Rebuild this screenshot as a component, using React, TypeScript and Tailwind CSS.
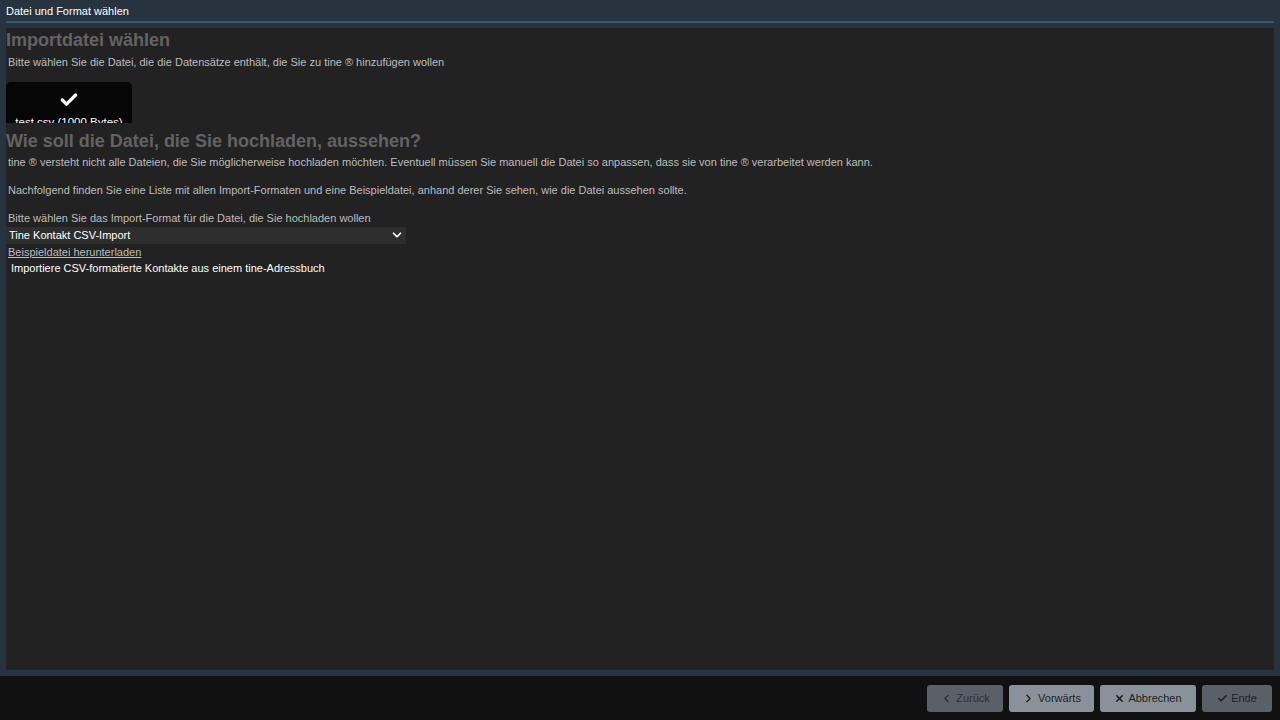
import React, { useState } from 'react';
import { Check, ChevronDown, ChevronLeft, ChevronRight, X } from 'lucide-react';

const formats = [
  { id: 'tine-csv', label: 'Tine Kontakt CSV-Import', description: 'Importiere CSV-formatierte Kontakte aus einem tine-Adressbuch' },
  { id: 'vcard', label: 'vCard Import', description: 'Importiere Kontakte aus einer vCard-Datei' },
];

const App: React.FC = () => {
  const [format, setFormat] = useState(formats[0].id);
  const current = formats.find((f) => f.id === format) ?? formats[0];

  return (
    <div className="flex flex-col h-[720px] w-full bg-[#27343f] text-[11px] font-['Liberation_Sans',Arial,sans-serif] overflow-hidden">
      {/* Window title */}
      <div className="px-[6px] pt-[4px] h-[21px] text-white leading-[14px]">Datei und Format wählen</div>
      <div className="mx-[6px] h-[2px] bg-[#35557a]" />

      {/* Wizard step */}
      <div className="flex-1 mx-[6px] mt-[5px] mb-[6px] bg-[#222222] overflow-hidden">
        <h2 className="text-[18px] font-bold text-[#626262] leading-[22px] mt-[1px]">Importdatei wählen</h2>
        <p className="text-[#bdbdbd] px-[2px] mt-[5px] leading-[13px]">
          Bitte wählen Sie die Datei, die die Datensätze enthält, die Sie zu tine ® hinzufügen wollen
        </p>

        {/* uploaded file tile, clipped like in the uploader */}
        <div className="mt-[13px] w-[126px] h-[41px] bg-[#060606] rounded-t-[5px] flex flex-col items-center overflow-hidden">
          <Check className="w-[20px] h-[20px] mt-[8px] text-white shrink-0" strokeWidth={4} />
          <span className="text-white text-[11.5px] mt-[6px] leading-[13px] whitespace-nowrap shrink-0">test.csv (1000 Bytes)</span>
        </div>

        <h2 className="text-[18px] font-bold text-[#626262] leading-[22px] mt-[7px]">
          Wie soll die Datei, die Sie hochladen, aussehen?
        </h2>
        <div className="px-[2px] text-[#bdbdbd] leading-[13px]">
          <p className="mt-[4px]">
            tine ® versteht nicht alle Dateien, die Sie möglicherweise hochladen möchten. Eventuell müssen Sie manuell die Datei so anpassen, dass sie von tine ® verarbeitet werden kann.
          </p>
          <p className="mt-[15px]">
            Nachfolgend finden Sie eine Liste mit allen Import-Formaten und eine Beispieldatei, anhand derer Sie sehen, wie die Datei aussehen sollte.
          </p>
          <p className="mt-[15px]">Bitte wählen Sie das Import-Format für die Datei, die Sie hochladen wollen</p>
        </div>

        <div className="relative mt-[2px] w-[400px] h-[17px] bg-[#2e2e2e]">
          <select
            value={format}
            onChange={(e) => setFormat(e.target.value)}
            className="appearance-none w-full h-full bg-transparent text-white pl-[3px] leading-[17px] outline-none"
          >
            {formats.map((f) => (
              <option key={f.id} value={f.id} className="bg-[#2e2e2e]">
                {f.label}
              </option>
            ))}
          </select>
          <ChevronDown className="absolute right-[2px] top-[1px] w-[14px] h-[14px] text-white pointer-events-none" strokeWidth={3} />
        </div>
        <a className="block px-[2px] mt-[2px] text-[#bdbdbd] underline leading-[13px] w-max cursor-pointer">
          Beispieldatei herunterladen
        </a>
        <p className="px-[5px] mt-[3px] text-white leading-[13px]">{current.description}</p>
      </div>

      {/* Button bar */}
      <div className="h-[44px] bg-[#111111] flex items-start pt-[9px] justify-end gap-[6px] pr-[8px]">
        <button className="flex items-center gap-[3px] h-[27px] w-[76px] justify-center rounded-[3px] bg-[#5b6068] text-[#27303a]">
          <ChevronLeft className="w-[13px] h-[13px]" strokeWidth={2.5} />
          Zurück
        </button>
        <button className="flex items-center gap-[3px] h-[27px] w-[85px] justify-center rounded-[3px] bg-[#89929b] text-[#1f1f1f]">
          <ChevronRight className="w-[13px] h-[13px]" strokeWidth={2.5} />
          Vorwärts
        </button>
        <button className="flex items-center gap-[3px] h-[27px] w-[96px] justify-center rounded-[3px] bg-[#89929b] text-[#1f1f1f]">
          <X className="w-[11px] h-[11px]" strokeWidth={3.5} />
          Abbrechen
        </button>
        <button className="flex items-center gap-[3px] h-[27px] w-[70px] justify-center rounded-[3px] bg-[#5b6068] text-[#1f1f1f]">
          <Check className="w-[11px] h-[11px]" strokeWidth={3.5} />
          Ende
        </button>
      </div>
    </div>
  );
};

export default App;
